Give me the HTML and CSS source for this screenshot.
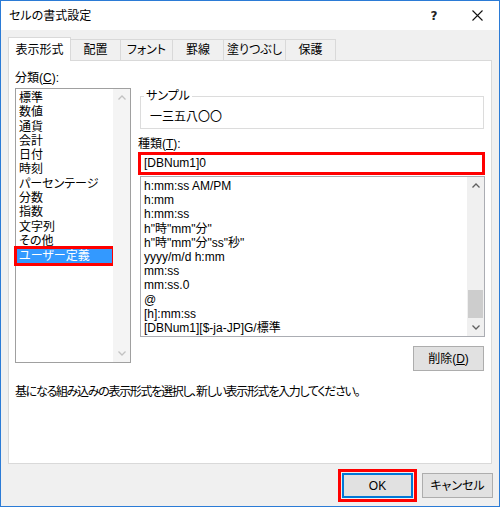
FILE: index.html
```html
<!DOCTYPE html>
<html lang="ja">
<head>
<meta charset="utf-8">
<title>セルの書式設定</title>
<link rel="stylesheet" href="styles.css">
</head>
<body>
<div class="window">
  <div class="titlebar">
    <span class="title">セルの書式設定</span>
    <span class="help">?</span>
    <span class="close"><svg width="11" height="11" viewBox="0 0 11 11"><path d="M0.5 0.5 L10.5 10.5 M10.5 0.5 L0.5 10.5" stroke="#111" stroke-width="1.1" fill="none"/></svg></span>
  </div>
  <div class="body">
    <div class="tabs">
      <div class="tab active w-disp">表示形式</div>
      <div class="tab w-haichi">配置</div>
      <div class="tab w-font">フォント</div>
      <div class="tab w-kei">罫線</div>
      <div class="tab w-nuri">塗りつぶし</div>
      <div class="tab w-hogo">保護</div>
    </div>
    <div class="panel">
      <div class="columns">
        <div class="left">
          <div class="label">分類(<u>C</u>):</div>
          <div class="listbox cat">
            <ul class="items">
              <li>標準</li>
              <li>数値</li>
              <li>通貨</li>
              <li>会計</li>
              <li>日付</li>
              <li>時刻</li>
              <li>パーセンテージ</li>
              <li>分数</li>
              <li>指数</li>
              <li>文字列</li>
              <li>その他</li>
              <li class="selected">ユーザー定義</li>
            </ul>
            <div class="scrollbar disabled">
              <span class="arrow"><svg width="8" height="5" viewBox="0 0 8 5"><polyline points="0.5,4.5 4,1 7.5,4.5" fill="none" stroke="#c2c2c2" stroke-width="1.3"/></svg></span>
              <span class="track"></span>
              <span class="arrow"><svg width="8" height="5" viewBox="0 0 8 5"><polyline points="0.5,0.5 4,4 7.5,0.5" fill="none" stroke="#c2c2c2" stroke-width="1.3"/></svg></span>
            </div>
          </div>
        </div>
        <div class="right">
          <fieldset class="sample">
            <legend>サンプル</legend>
            <div class="sample-value">一三五八〇〇</div>
          </fieldset>
          <div class="label kind">種類(<u>T</u>):</div>
          <div class="input">[DBNum1]0</div>
          <div class="listbox fmt">
            <ul class="items">
              <li>h:mm:ss AM/PM</li>
              <li>h:mm</li>
              <li>h:mm:ss</li>
              <li>h"時"mm"分"</li>
              <li>h"時"mm"分"ss"秒"</li>
              <li>yyyy/m/d h:mm</li>
              <li>mm:ss</li>
              <li>mm:ss.0</li>
              <li>@</li>
              <li>[h]:mm:ss</li>
              <li>[DBNum1][$-ja-JP]G/標準</li>
            </ul>
            <div class="scrollbar">
              <span class="arrow"><svg width="8" height="5" viewBox="0 0 8 5"><polyline points="0.5,4.5 4,1 7.5,4.5" fill="none" stroke="#606060" stroke-width="1.3"/></svg></span>
              <span class="track"><span class="thumb"></span></span>
              <span class="arrow"><svg width="8" height="5" viewBox="0 0 8 5"><polyline points="0.5,0.5 4,4 7.5,0.5" fill="none" stroke="#606060" stroke-width="1.3"/></svg></span>
            </div>
          </div>
          <div class="btnrow">
            <button class="btn delete">削除(<u>D</u>)</button>
          </div>
        </div>
      </div>
      <p class="hint">基になる組み込みの表示形式を選択し、新しい表示形式を入力してください。</p>
    </div>
    <div class="footer">
      <button class="btn ok">OK</button>
      <button class="btn cancel">キャンセル</button>
    </div>
  </div>
</div>
</body>
</html>
```
FILE: styles.css
```css
* { box-sizing: border-box; }
html, body { margin: 0; padding: 0; }
body {
  width: 500px;
  height: 507px;
  font-family: "Liberation Sans", "Noto Sans CJK JP", sans-serif;
  font-size: 12px;
  line-height: 14px;
  color: #000;
  font-feature-settings: "palt";
  background: #fff;
}
.window {
  width: 500px;
  height: 507px;
  border: 1px solid #2b7bd6;
  display: flex;
  flex-direction: column;
  background: #f0f0f0;
}
.titlebar {
  height: 29px;
  background: #fff;
  display: flex;
  align-items: center;
  padding-left: 8px;
}
.title { flex: 1; }
.help {
  width: 20px;
  text-align: center;
  font-weight: bold;
  font-family: "DejaVu Sans", sans-serif;
  font-size: 12px;
  margin-right: 28px;
  color: #222;
}
.close {
  width: 11px;
  height: 11px;
  display: flex;
  margin-right: 16px;
}
.body {
  flex: 1;
  display: flex;
  flex-direction: column;
  padding: 7px 7px 0 7px;
}
.tabs {
  display: flex;
  align-items: flex-end;
  height: 24px;
}
.tab {
  height: 21px;
  margin-bottom: 1px;
  border: 1px solid #d9d9d9;
  border-bottom: none;
  background: #f0f0f0;
  text-align: center;
  line-height: 20px;
  margin-left: -1px;
}
.tab.active {
  height: 24px;
  margin-bottom: 0;
  margin-left: 0;
  background: #fff;
  position: relative;
  z-index: 1;
  line-height: 24px;
}
.w-disp { width: 63px; }
.w-haichi { width: 51px; }
.w-font { width: 53px; }
.w-kei { width: 52px; }
.w-nuri { width: 63px; }
.w-hogo { width: 51px; }
.panel {
  margin-top: -1px;
  height: 404px;
  background: #fff;
  border: 1px solid #d9d9d9;
  padding: 10px 0 0 6px;
}
.columns {
  display: flex;
  gap: 7px;
}
.left { width: 116px; }
.label { height: 14px; }
.left .label { margin-bottom: 3px; }
.listbox {
  border: 1px solid #a0a0a0;
  display: flex;
  background: #fff;
}
.listbox .items {
  list-style: none;
  margin: 0;
  padding: 2px 0 0 1px;
  flex: 1;
}
.listbox li {
  padding-left: 2px;
  white-space: nowrap;
}
.cat { height: 275px; }
.cat li { line-height: 14.3px; height: 14.3px; }
.cat li.selected {
  background: #3399ff;
  color: #fff;
  outline: 3px solid #ff0000;
  margin-right: 1px;
  height: 14px;
  line-height: 14px;
  margin-top: 1px;
}
.scrollbar {
  width: 17px;
  background: #f0f0f0;
  display: flex;
  flex-direction: column;
}
.scrollbar.disabled { background: #f4f4f4; }
.arrow {
  height: 17px;
  display: flex;
  align-items: center;
  justify-content: center;
}
.track {
  flex: 1;
  display: flex;
  flex-direction: column;
  justify-content: flex-end;
  padding: 0 1px 1px 1px;
}
.thumb {
  display: block;
  height: 28px;
  background: #cdcdcd;
}
.right {
  width: 347px;
  padding-top: 18px;
}
.sample {
  margin: 0 1px 0 2px;
  padding: 7px 9px 4px 9px;
  border: 1px solid #dcdcdc;
  min-width: 0;
}
.sample legend {
  padding: 0 2px;
  margin-left: -6px;
  line-height: 14px;
}
.sample-value { height: 14px; }
.kind { margin-top: 8px; }
.input {
  margin-top: 1px;
  height: 23px;
  border: 3px solid #ff0000;
  padding-left: 3px;
  line-height: 17px;
  background: #fff;
}
.fmt {
  margin: 1px 0 0 2px;
  height: 161px;
  border-color: #abadb3;
}
.fmt .items { padding-top: 2px; }
.fmt li { line-height: 14.2px; height: 14.2px; }
.btnrow {
  display: flex;
  justify-content: flex-end;
  margin-top: 9px;
  padding-right: 1px;
}
.btn {
  font-family: inherit;
  font-size: 12px;
  font-feature-settings: "palt";
  height: 25px;
  width: 71px;
  padding: 0;
  border: 1px solid #adadad;
  background: #e1e1e1;
  color: #000;
  line-height: 14px;
}
.hint {
  margin: 14px 0 0 0;
  letter-spacing: -1.3px;
}
.footer {
  display: flex;
  justify-content: flex-end;
  gap: 9px;
  padding: 9px 0 0 0;
  margin-right: -1px;
}
.btn.ok {
  border: 1px solid #0078d7;
  box-shadow: inset 0 0 0 1px #0078d7;
  outline: 3px solid #ff0000;
  outline-offset: 1px;
}
```
